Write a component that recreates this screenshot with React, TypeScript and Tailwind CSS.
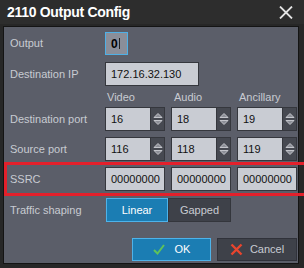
import React from "react";

const font = { fontFamily: '"Liberation Sans", Arial, sans-serif' };

function Spinner() {
  return (
    <div className="w-[14px] h-full bg-[#464951] border-l border-[#35373d] flex items-center justify-center">
      <svg width="10" height="14" viewBox="0 0 10 14">
        <polygon points="5,1.5 9,5.5 1,5.5" fill="#8c8f97" stroke="#c3c5cb" strokeWidth="1" />
        <polygon points="5,12.5 9,8.5 1,8.5" fill="#8c8f97" stroke="#c3c5cb" strokeWidth="1" />
      </svg>
    </div>
  );
}

function SpinBox({ value }: { value: string }) {
  return (
    <div className="w-[60px] h-[24px] flex border border-[#35373d]">
      <div className="flex-1 bg-[#c9ccd3] flex items-center pl-[5px] text-[11px] text-[#111]">{value}</div>
      <Spinner />
    </div>
  );
}

function TextBox({ value, className }: { value: string; className?: string }) {
  return (
    <div
      className={`h-[24px] bg-[#c9ccd3] border border-[#35373d] flex items-center pl-[5px] text-[11px] text-[#111] ${className ?? ""}`}
    >
      {value}
    </div>
  );
}

function Row({ label, className, children }: { label: string; className?: string; children: React.ReactNode }) {
  return (
    <div className={`flex items-center ${className ?? ""}`}>
      <div className="w-[95px] shrink-0 text-[11px] text-[#c8cbd2]">{label}</div>
      {children}
    </div>
  );
}

export default function App() {
  return (
    <div className="relative w-[304px] h-[268px] bg-[#272727] overflow-hidden" style={font}>
      {/* title bar */}
      <div className="h-[24px] bg-[#2d2d2d] flex items-center justify-between pl-[7px] pr-[11px]">
        <span className="text-[14px] font-bold text-white tracking-[-0.3px]">2110 Output Config</span>
        <svg width="14" height="13" viewBox="0 0 14 13">
          <path d="M1 0.5 L13 12.5 M13 0.5 L1 12.5" stroke="#e4e4e4" strokeWidth="1.8" />
        </svg>
      </div>

      {/* content */}
      <div className="mt-[2px] ml-[3px] w-[296px] h-[238px] border border-[#141414] bg-[#5b5e69] pl-[6px] pr-[1px]">
        <Row label="Output" className="mt-[5px] h-[23px]">
          <div className="w-[23px] h-[23px] bg-[#8a8e99] border border-[#4fb0e6] flex items-center pl-[5px]">
            <span className="text-[12px] font-bold text-black">0</span>
            <span className="ml-[1px] w-px h-[11px] bg-[#222]" />
          </div>
        </Row>

        <Row label="Destination IP" className="mt-[7px] h-[24px]">
          <TextBox value="172.16.32.130" className="w-[94px]" />
        </Row>

        <div className="flex pl-[95px] pt-[4px] pb-[3px] h-[21px] text-[11px] leading-[14px] text-[#c8cbd2]">
          <div className="w-[66px] pl-[2px]">Video</div>
          <div className="w-[66px] pl-[3px]">Audio</div>
          <div className="w-[60px] pl-[2px]">Ancillary</div>
        </div>

        <Row label="Destination port" className="h-[24px]">
          <div className="flex gap-[6px]">
            <SpinBox value="16" />
            <SpinBox value="18" />
            <SpinBox value="19" />
          </div>
        </Row>

        <Row label="Source port" className="mt-[6px] h-[24px]">
          <div className="flex gap-[6px]">
            <SpinBox value="116" />
            <SpinBox value="118" />
            <SpinBox value="119" />
          </div>
        </Row>

        <Row label="SSRC" className="mt-[6px] h-[24px]">
          <div className="flex gap-[6px]">
            <TextBox value="00000000" className="w-[60px] text-[#2a2a2a]" />
            <TextBox value="00000000" className="w-[60px] text-[#2a2a2a]" />
            <TextBox value="00000000" className="w-[60px] text-[#2a2a2a]" />
          </div>
        </Row>

        <Row label="Traffic shaping" className="mt-[7px] h-[24px]">
          <div className="ml-[1px] flex h-[24px] text-[11px]">
            <div className="w-[62px] bg-[#1b7db3] border border-[#4db3ea] text-white flex items-center justify-center">
              Linear
            </div>
            <div className="w-[63px] bg-[#3e4149] border border-[#34363c] text-[#c8cbd2] flex items-center justify-center">
              Gapped
            </div>
          </div>
        </Row>

        <div className="mt-[16px] flex justify-end gap-[6px] text-[11px]">
          <div className="w-[79px] h-[23px] bg-[#1b7db3] border border-[#4db3ea] flex items-center justify-center gap-[10px] text-white">
            <svg width="12" height="11" viewBox="0 0 12 11">
              <path d="M1 6 L4.5 9.5 L11 1" fill="none" stroke="#5fc25a" strokeWidth="2" />
            </svg>
            OK
          </div>
          <div className="w-[80px] h-[23px] bg-[#3e4149] border border-[#30323a] flex items-center justify-center gap-[7px] text-[#c8cbd2]">
            <svg width="13" height="13" viewBox="0 0 13 13">
              <path d="M1.5 1.5 L11.5 11.5 M11.5 1.5 L1.5 11.5" stroke="#e8452e" strokeWidth="2.4" />
            </svg>
            Cancel
          </div>
        </div>
      </div>

      {/* red annotation */}
      <div className="absolute left-[4px] top-[162px] w-[310px] h-[34px] border-[3px] border-[#e3202b]" />
    </div>
  );
}
